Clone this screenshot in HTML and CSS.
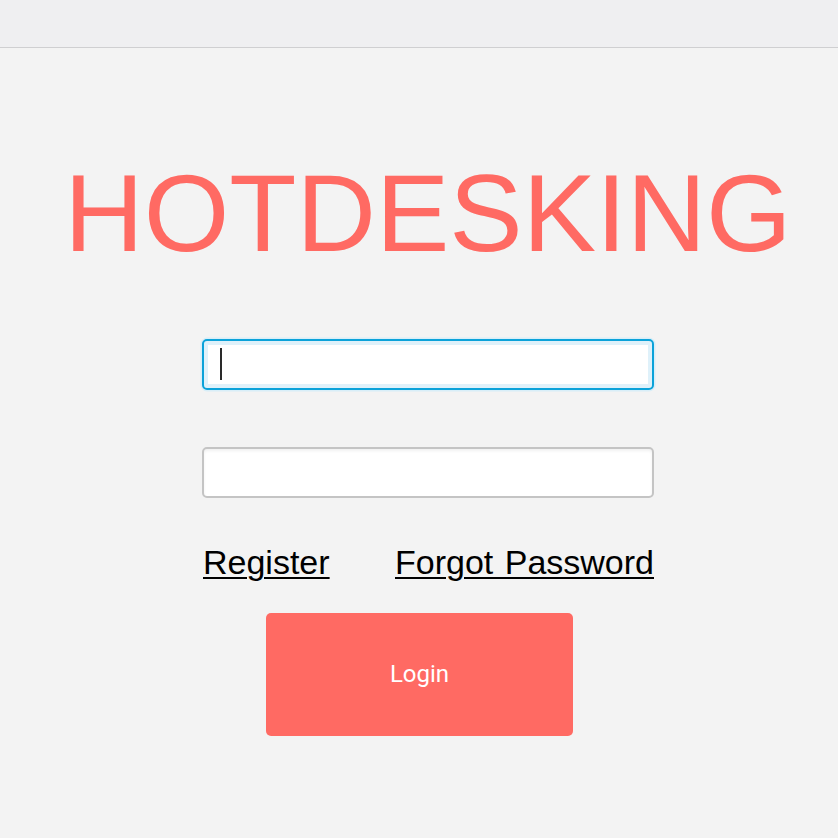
FILE: index.html
```html
<!DOCTYPE html>
<html>
<head>
<meta charset="utf-8">
<title>Hotdesking</title>
<link rel="stylesheet" href="styles.css">
</head>
<body>
<header class="topbar"></header>
<main class="page">
  <h1 class="title">HOTDESKING</h1>
  <form class="form">
    <div class="field field-focus">
      <input class="input input-active" type="text">
      <span class="caret"></span>
    </div>
    <div class="field">
      <input class="input" type="password">
    </div>
    <div class="links">
      <a class="link" href="#">Register</a>
      <a class="link link-wide" href="#">Forgot Password</a>
    </div>
    <button class="login" type="button">Login</button>
  </form>
</main>
</body>
</html>
```

FILE: styles.css
```css
html, body {
  margin: 0;
  padding: 0;
}
body {
  background: #f3f3f3;
  font-family: "Liberation Sans", Arial, sans-serif;
  min-height: 838px;
}
.topbar {
  height: 47px;
  background: #efeff1;
  border-bottom: 1px solid #cfcfd1;
}
.page {
  display: flex;
  flex-direction: column;
  align-items: center;
  padding-left: 18px;
}
.title {
  margin: 110px 0 0 0;
  font-family: "Liberation Sans", Arial, sans-serif;
  font-weight: 400;
  font-size: 110px;
  line-height: 110px;
  color: #ff6a63;
  letter-spacing: 0;
}
.form {
  width: 452px;
  margin-top: 71px;
  display: flex;
  flex-direction: column;
}
.field {
  position: relative;
  height: 51px;
}
.field + .field {
  margin-top: 57px;
}
.input {
  box-sizing: border-box;
  width: 100%;
  height: 51px;
  margin: 0;
  border: 2px solid #c4c4c4;
  border-radius: 5px;
  background: #fff;
  outline: none;
  box-shadow: inset 0 2px 3px rgba(0,0,0,0.06);
  caret-color: transparent;
}
.input-active {
  border: 2px solid #0ba2d9;
  box-shadow: 0 0 0 1.5px #d8eef8, inset 0 0 0 4px #dff1fa;
}
.caret {
  position: absolute;
  left: 18px;
  top: 9px;
  width: 2px;
  height: 32px;
  background: #2a2a2a;
}
.links {
  display: flex;
  justify-content: space-between;
  margin-top: 45px;
  padding-left: 1px;
}
.link {
  color: #000;
  font-size: 34px;
  line-height: 38px;
  text-decoration: underline;
  text-decoration-thickness: 2px;
  text-underline-offset: 3px;
}
.link-wide {
  word-spacing: 2px;
}
.login {
  align-self: flex-start;
  margin: 32px 0 0 64px;
  width: 307px;
  height: 123px;
  border: none;
  border-radius: 5px;
  background: #ff6a63;
  color: #fff;
  font-family: Roboto, "Liberation Sans", sans-serif;
  font-size: 24px;
  padding: 0 0 2px 0;
}
```
